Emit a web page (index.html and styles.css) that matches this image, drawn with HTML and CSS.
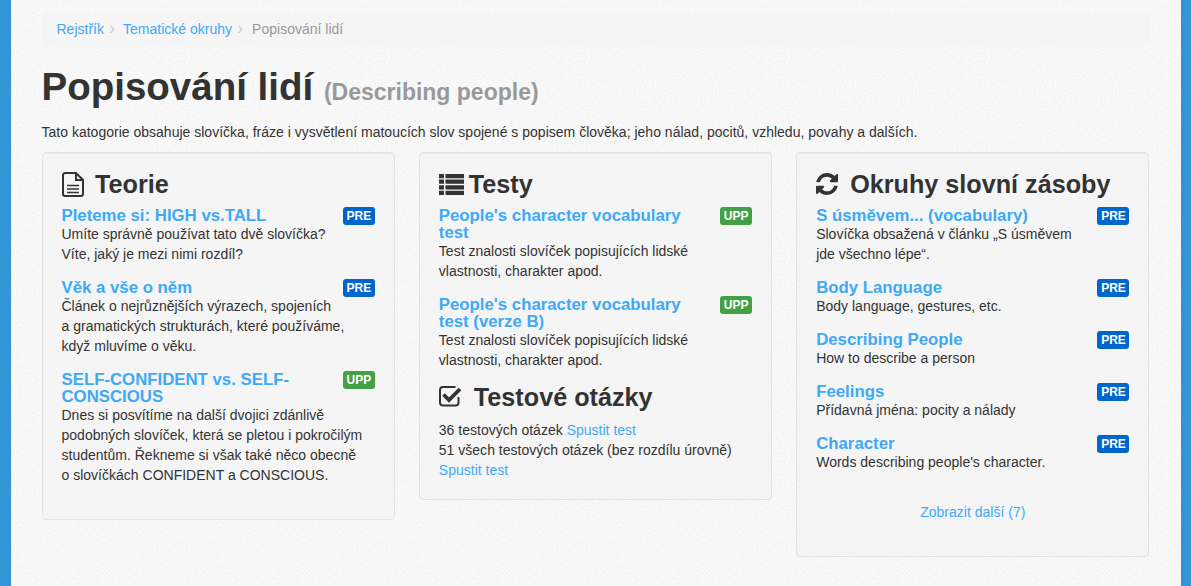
FILE: index.html
```html
<!DOCTYPE html>
<html lang="cs">
<head>
<meta charset="utf-8">
<title>Popisování lidí</title>
<link rel="stylesheet" href="styles.css">
</head>
<body>
<main class="page">
  <nav class="crumbs">
    <a href="#">Rejstřík</a><span class="sep">›</span><a href="#">Tematické okruhy</a><span class="sep">›</span><span class="current">Popisování lidí</span>
  </nav>
  <h1 class="title">Popisování lidí <small>(Describing people)</small></h1>
  <p class="lead">Tato katogorie obsahuje slovíčka, fráze i vysvětlení matoucích slov spojené s popisem člověka; jeho nálad, pocitů, vzhledu, povahy a dalších.</p>
  <div class="columns">
    <section class="well">
      <h3 class="heading">
        <svg class="icon icon-file" viewBox="0 0 22 25"><path d="M14 1H3.200A2.200 2.200 0 0 0 1 3.200v18.600A2.200 2.200 0 0 0 3.200 24h15.600a2.200 2.200 0 0 0 2.200-2.200V8zM14 1v7h7" fill="none" stroke="#333" stroke-width="2"/><path d="M5 13.500h12M5 17h12M5 20.500h12" fill="none" stroke="#333" stroke-width="1.600"/></svg>
        Teorie
      </h3>
      <article class="item">
        <div class="item-head"><a href="#">Pleteme si: HIGH vs.TALL</a><span class="tag pre">PRE</span></div>
        <p>Umíte správně používat tato dvě slovíčka?<br>Víte, jaký je mezi nimi rozdíl?</p>
      </article>
      <article class="item">
        <div class="item-head"><a href="#">Věk a vše o něm</a><span class="tag pre">PRE</span></div>
        <p>Článek o nejrůznějších výrazech, spojeních a&nbsp;gramatických strukturách, které používáme, když mluvíme o věku.</p>
      </article>
      <article class="item">
        <div class="item-head"><a href="#">SELF-CONFIDENT vs. SELF-CONSCIOUS</a><span class="tag upp">UPP</span></div>
        <p>Dnes si posvítíme na další dvojici zdánlivě podobných slovíček, která se pletou i pokročilým studentům. Řekneme si však také něco obecně o&nbsp;slovíčkách CONFIDENT a CONSCIOUS.</p>
      </article>
    </section>
    <section class="well">
      <h3 class="heading">
        <svg class="icon icon-list" viewBox="0 0 25 21"><path d="M0 0h5v4.200H0zM6.500 0H25v4.200H6.500zM0 5.600h5v4.200H0zM6.500 5.600H25v4.200H6.500zM0 11.200h5v4.200H0zM6.500 11.200H25v4.200H6.500zM0 16.800h5V21H0zM6.500 16.800H25V21H6.500z" fill="#333"/></svg>
        Testy
      </h3>
      <article class="item">
        <div class="item-head"><a href="#">People's character vocabulary test</a><span class="tag upp">UPP</span></div>
        <p>Test znalosti slovíček popisujících lidské vlastnosti, charakter apod.</p>
      </article>
      <article class="item">
        <div class="item-head"><a href="#">People's character vocabulary test (verze B)</a><span class="tag upp">UPP</span></div>
        <p>Test znalosti slovíček popisujících lidské vlastnosti, charakter apod.</p>
      </article>
      <h3 class="heading heading-otazky">
        <svg class="icon icon-check" viewBox="0 0 23 22"><path d="M19.500 11v5.500a3 3 0 0 1-3 3H4a3 3 0 0 1-3-3V4a3 3 0 0 1 3-3h12.500" fill="none" stroke="#333" stroke-width="2"/><path d="M4.500 8.500l5.500 5.500L21 3" fill="none" stroke="#333" stroke-width="3.800"/></svg>
        Testové otázky
      </h3>
      <div class="plain">
        <div>36 testových otázek <a href="#">Spustit test</a></div>
        <div>51 všech testových otázek (bez rozdílu úrovně) <a href="#">Spustit test</a></div>
      </div>
    </section>
    <section class="well well-vocab">
      <h3 class="heading">
        <svg class="icon icon-refresh" viewBox="0 0 1536 1536"><path d="M1511 928q0 5-1 7-64 268-268 434.500t-478 166.500q-146 0-282.500-55t-243.500-157l-129 129q-19 19-45 19t-45-19-19-45v-448q0-26 19-45t45-19h448q26 0 45 19t19 45-19 45l-137 137q71 66 161 102t187 36q134 0 250-65t186-179q11-17 53-117 8-23 30-23h192q13 0 22.500 9.500t9.500 22.500zm25-800v448q0 26-19 45t-45 19h-448q-26 0-45-19t-19-45 19-45l138-138q-148-137-349-137-134 0-250 65t-186 179q-11 17-53 117-8 23-30 23h-199q-13 0-22.500-9.500t-9.500-22.500v-7q65-268 270-434.500t480-166.500q146 0 284 55.500t245 156.500l130-129q19-19 45-19t45 19 19 45z" fill="#333"/></svg>
        Okruhy slovní zásoby
      </h3>
      <article class="item">
        <div class="item-head"><a href="#">S úsměvem... (vocabulary)</a><span class="tag pre">PRE</span></div>
        <p>Slovíčka obsažená v článku „S úsměvem jde&nbsp;všechno&nbsp;lépe“.</p>
      </article>
      <article class="item">
        <div class="item-head"><a href="#">Body Language</a><span class="tag pre">PRE</span></div>
        <p>Body language, gestures, etc.</p>
      </article>
      <article class="item">
        <div class="item-head"><a href="#">Describing People</a><span class="tag pre">PRE</span></div>
        <p>How to describe a person</p>
      </article>
      <article class="item">
        <div class="item-head"><a href="#">Feelings</a><span class="tag pre">PRE</span></div>
        <p>Přídavná jména: pocity a nálady</p>
      </article>
      <article class="item">
        <div class="item-head"><a href="#">Character</a><span class="tag pre">PRE</span></div>
        <p>Words describing people's character.</p>
      </article>
      <div class="more"><a href="#">Zobrazit další (7)</a></div>
    </section>
  </div>
</main>
</body>
</html>
```
FILE: styles.css
```css
* { box-sizing: border-box; }
html, body { height: 100%; }
body {
  margin: 0;
  overflow: hidden;
  background-color: #2f95d8;
  background-image: url("data:image/svg+xml,%3Csvg xmlns='http://www.w3.org/2000/svg' width='200' height='200'%3E%3Cfilter id='n'%3E%3CfeTurbulence type='fractalNoise' baseFrequency='.9' numOctaves='2' seed='9'/%3E%3CfeColorMatrix values='0 0 0 0 .1 0 0 0 0 .3 0 0 0 0 .5 .5 0 0 0 -.16'/%3E%3C/filter%3E%3Crect width='200' height='200' filter='url(%23n)'/%3E%3C/svg%3E");
  font-family: "Liberation Sans", Arial, sans-serif;
  font-size: 14px;
  line-height: 20px;
  letter-spacing: .008px;
  color: #333;
}
a { color: #3fa9f5; text-decoration: none; }
.page {
  width: 1170px;
  min-height: 100%;
  margin: 0 auto;
  padding: 12px 31px 0;
  background-color: #fcfcfc;
  background-image: url("data:image/svg+xml,%3Csvg xmlns='http://www.w3.org/2000/svg' width='200' height='200'%3E%3Cfilter id='n'%3E%3CfeTurbulence type='fractalNoise' baseFrequency='.9' numOctaves='2' seed='4'/%3E%3CfeColorMatrix values='0 0 0 0 .6 0 0 0 0 .6 0 0 0 0 .6 .5 0 0 0 -.16'/%3E%3C/filter%3E%3Crect width='200' height='200' filter='url(%23n)'/%3E%3C/svg%3E");
}
.crumbs {
  height: 35px;
  padding: 7px 15px;
  background: #f5f5f5;
  border-radius: 4px;
  color: #999;
}
.sep { display: inline-block; width: 19px; padding-left: 5px; color: #ccc; font-size: 18px; line-height: 18px; }
.current { margin-left: 1px; }
.title {
  margin: 20px 0 10px;
  font-size: 38.5px;
  line-height: 40px;
  font-weight: 700;
  letter-spacing: 0;
  color: #333;
}
.title small { font-size: 23px; color: #999; font-weight: 700; }
.lead { margin: 0 0 10px; }
.columns { display: flex; align-items: flex-start; gap: 24px; }
.well {
  flex: 1 1 0;
  padding: 18px 19px 19px;
  background: #f5f5f5;
  border: 1px solid #e3e3e3;
  border-radius: 4px;
  box-shadow: inset 0 1px 1px rgba(0,0,0,.05);
}
.heading {
  display: flex;
  align-items: center;
  margin: 0 0 10px;
  font-size: 25.2px;
  line-height: 26px;
  font-weight: 700;
  letter-spacing: 0;
  color: #333;
}
.heading-otazky { margin-top: -1px; }
.icon { flex: none; display: block; }
.icon-file { width: 22px; height: 25px; margin-right: 11.5px; }
.icon-list { width: 25px; height: 21px; margin-right: 5px; }
.icon-check { width: 23px; height: 22px; margin-right: 12px; }
.icon-refresh { width: 22px; height: 22px; margin-right: 12px; }
.item { margin-bottom: 15px; }
.item-head { display: flex; align-items: flex-start; justify-content: space-between; }
.item-head a {
  flex: 1 1 0;
  font-size: 16.8px;
  line-height: 17px;
  font-weight: 700;
  letter-spacing: 0;
}
.tag {
  flex: none;
  width: 32px;
  height: 18px;
  margin: 0 0 -2px 5px;
  border-radius: 3px;
  color: #fff;
  font-size: 12px;
  line-height: 18px;
  font-weight: 700;
  letter-spacing: 0;
  text-align: center;
}
.pre { background: #0066cc; }
.upp { background: #43a047; }
.item p { margin: 0; max-width: 302px; }
.plain { max-width: 302px; }
.well-vocab { padding-bottom: 34px; }
.more { text-align: center; padding-top: 15px; }
```
